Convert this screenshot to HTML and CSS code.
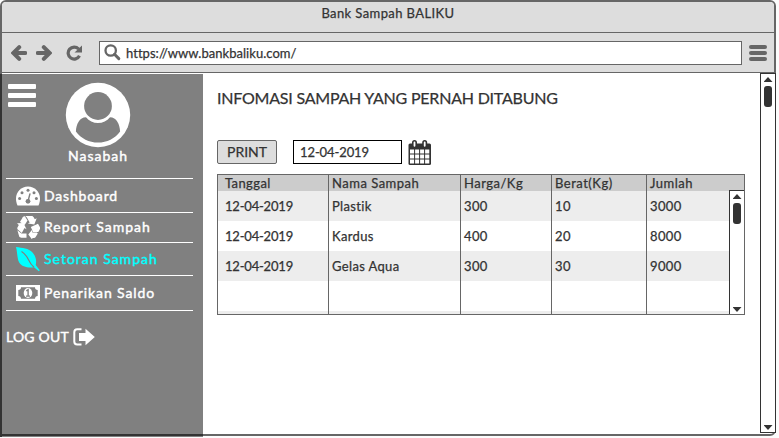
FILE: index.html
```html
<!DOCTYPE html>
<html lang="id">
<head>
<meta charset="utf-8">
<title>Bank Sampah BALIKU</title>
<link rel="stylesheet" href="styles.css">
</head>
<body>
<div class="window">
  <header class="titlebar"><span>Bank Sampah BALIKU</span></header>
  <div class="toolbar">
    <svg class="tool back" width="16" height="16" viewBox="0 0 16 16"><path d="M8.200 2.200 2.400 8l5.800 5.800M3 8h11.300" fill="none" stroke="#666" stroke-width="4" stroke-linecap="round" stroke-linejoin="miter"/></svg>
    <svg class="tool forward" width="16" height="16" viewBox="0 0 16 16"><path d="M7.800 2.200 13.600 8l-5.800 5.800M13 8H1.700" fill="none" stroke="#666" stroke-width="4" stroke-linecap="round" stroke-linejoin="miter"/></svg>
    <svg class="tool reload" width="16" height="16" viewBox="0 0 16 16"><path d="M12.600 4A6 6 0 1 0 13.500 10.800" fill="none" stroke="#666" stroke-width="3.200"/><path d="M16 .5V7.500H8.500z" fill="#666"/></svg>
    <div class="address">
      <svg width="17" height="17" viewBox="0 0 17 17"><circle cx="6.700" cy="6.500" r="5.200" fill="none" stroke="#666" stroke-width="2.300"/><path d="M10.500 10.300l4.300 4.300" stroke="#666" stroke-width="3" stroke-linecap="round"/></svg>
      <span class="url">https://www.bankbaliku.com/</span>
    </div>
    <div class="menu"><i></i><i></i><i></i></div>
  </div>
  <div class="page">
    <aside class="sidebar">
      <div class="burger"><i></i><i></i><i></i></div>
      <div class="profile">
        <svg width="66" height="66" viewBox="0 0 66 66"><circle cx="33" cy="33" r="32.200" fill="#fff"/><circle cx="33" cy="24" r="13.900" fill="#808080"/><path d="M21 35.200c-6.500 0-9.800 7-10.100 14.300C16 56.500 24 60.600 33 60.600s17-4.100 22.100-11.100C54.800 42.200 51.500 35.200 45 35.200c-3 3.500-7.200 5.800-12 5.800s-9-2.300-12-5.800z" fill="#808080"/></svg>
        <span class="name">Nasabah</span>
      </div>
      <nav>
        <a class="item dash">
          <svg width="24" height="20" viewBox="0 0 24 20"><path d="M1.500 19.500C.6 17.700 0 15 0 12.500 0 5.600 5.400.5 12 .5s12 5.100 12 12c0 2.500-.6 5.200-1.500 7z" fill="#fff"/><g fill="#808080"><circle cx="3.600" cy="12.500" r="1.500"/><circle cx="6" cy="6.700" r="1.500"/><circle cx="12" cy="4.200" r="1.500"/><circle cx="18" cy="6.700" r="1.500"/><circle cx="20.400" cy="12.500" r="1.500"/><circle cx="12" cy="15.300" r="2.400"/></g><path d="M12.200 14.500l1.700-6.500" stroke="#808080" stroke-width="1.400" stroke-linecap="round"/></svg>
          <span>Dashboard</span></a>
        <a class="item report">
          <svg width="24" height="24" viewBox="0 0 24 24" fill="#fff"><path d="M9.200 1h6.300c1 0 1.600.4 2 1.100l1.300 2.200 1.900-1.100-2.400 6.200-6.400-.9 1.800-1.100L10.700 2.300z"/><path d="M8.800 1.300 11.500 5.600 8.700 10 3.900 7 6.800 2.200C7.300 1.500 8 1.100 8.800 1.300z"/><path d="M1 8.200 7.500 8l3 6.200-2-1.100-2.700 4.900L1.700 14.600c-.5-.8-.6-1.600-.1-2.400l1.200-2.100z"/><path d="M1.400 15.300l4 3.100h5.100v4.400H5.300c-.9 0-1.700-.5-2.100-1.200z"/><path d="M22 8.700l1.800 3.400c.4.800.3 1.600-.1 2.400l-1.400 2.600-5.200-.1-2.300-4.900z"/><path d="M21.800 18.400l-2.300 3.800c-.4.500-.8.700-1.500.7h-1.700v1.800L12.300 19.600l4-5v2.800h4.600z"/></svg>
          <span>Report Sampah</span></a>
        <a class="item setoran active">
          <svg width="24" height="25" viewBox="0 0 24 25"><path d="M0 0C6.500 1 12.500 1 16.500 5.500c3.300 3.700 4.300 8 3.200 12.500l4 5.300-.8.900-4.900-4C12 21 6 20 3.200 15.500.9 11.500 1.500 5 0 0z" fill="#0ff"/><path d="M5.500 4.500c3.500 2.300 5.500 5 7 8.300 1.400 3 3 5.500 5.500 7.500" fill="none" stroke="#808080" stroke-width="1.200"/></svg>
          <span>Setoran Sampah</span></a>
        <a class="item tarik">
          <svg width="24" height="16" viewBox="0 0 24 16"><path d="M0 0h24v16H0z" fill="#fff"/><path d="M5 2.200h14c0 1.700 1 2.800 2.700 2.800v6c-1.700 0-2.700 1.100-2.700 2.800H5c0-1.700-1-2.800-2.700-2.800V5C4 5 5 3.900 5 2.200z" fill="#808080"/><ellipse cx="12" cy="8" rx="4.300" ry="5.100" fill="#fff"/><path d="M10.300 5.900l1.800-1.200v6M10 11.100h4" fill="none" stroke="#808080" stroke-width="1.400"/></svg>
          <span>Penarikan Saldo</span></a>
      </nav>
      <a class="logout"><span>LOG OUT</span>
        <svg width="22" height="18" viewBox="0 0 22 18"><path d="M8.500 1.300H4.200C2.500 1.300 1.300 2.500 1.300 4.200v9.300c0 1.700 1.200 2.900 2.900 2.900h4.300" fill="none" stroke="#fff" stroke-width="2"/><path d="M6 5h6.500V.8L21.800 9l-9.300 8.300V13H6z" fill="#fff"/></svg></a>
    </aside>
    <main>
      <h1>INFOMASI SAMPAH YANG PERNAH DITABUNG</h1>
      <div class="controls">
        <button class="print">PRINT</button>
        <div class="date">12-04-2019</div>
        <svg width="24" height="26" viewBox="0 0 24 26"><rect x=".5" y="3.500" width="22.500" height="21.500" rx="1.500" fill="#333"/><path d="M2 9.500h4.100v4H2zm5.100 0h4v4h-4zm5 0h4v4h-4zm5 0h4.200v4h-4.200zM2 14.500h4.100v4H2zm5.100 0h4v4h-4zm5 0h4v4h-4zm5 0h4.200v4h-4.200zM2 19.500h4.100v4H2zm5.100 0h4v4h-4zm5 0h4v4h-4zm5 0h4.200v4h-4.200z" fill="#fff"/><path d="M6.500 2.500v3M16.700 2.500v3" stroke="#333" stroke-width="5" stroke-linecap="round"/><path d="M6.500 2.500v3.300M16.700 2.500v3.300" stroke="#fff" stroke-width="1.800" stroke-linecap="round"/></svg>
      </div>
      <div class="grid">
        <div class="row head"><span>Tanggal</span><span>Nama Sampah</span><span>Harga/Kg</span><span>Berat(Kg)</span><span>Jumlah</span></div>
        <div class="row"><span>12-04-2019</span><span>Plastik</span><span>300</span><span>10</span><span>3000</span></div>
        <div class="row"><span>12-04-2019</span><span>Kardus</span><span>400</span><span>20</span><span>8000</span></div>
        <div class="row"><span>12-04-2019</span><span>Gelas Aqua</span><span>300</span><span>30</span><span>9000</span></div>
        <div class="row"><span></span><span></span><span></span><span></span><span></span></div>
        <div class="row last"><span></span><span></span><span></span><span></span><span></span></div>
        <div class="scroll inner"><b class="up"></b><b class="thumb"></b><b class="down"></b></div>
      </div>
    </main>
    <div class="scroll outer"><b class="up"></b><b class="thumb"></b><b class="down"></b></div>
  </div>
</div>
</body>
</html>
```
FILE: styles.css
```css
* { box-sizing: border-box; }
body {
  margin: 0;
  height: 438px;
  overflow: hidden;
  background: #fcfcfc;
  color: #333;
  font: 400 13px/16px Lato, "Liberation Sans", sans-serif;
  -webkit-text-stroke: .25px currentColor;
}
svg { display: block; flex: none; }
span { white-space: nowrap; }
.window {
  width: 776px;
  height: 436px;
  border: 2px solid #666;
  border-radius: 6px;
  background: #fff;
}
.titlebar {
  height: 31px;
  padding-top: 3px;
  border-bottom: 1px solid #666;
  border-radius: 4px 4px 0 0;
  background: #ddd;
  text-align: center;
  letter-spacing: .4px;
}
.toolbar {
  display: flex;
  align-items: center;
  height: 40px;
  padding-left: 9px;
  border-bottom: 1px solid #666;
  background: #ddd;
}
.forward { margin-left: 9px; }
.reload { margin-left: 14px; }
.address {
  display: flex;
  align-items: center;
  gap: 5px;
  width: 643px;
  height: 24px;
  margin-left: 17px;
  padding-left: 4px;
  border: 1px solid #666;
  background: #fff;
}
.url { letter-spacing: .04px; }
.menu { display: grid; gap: 2px; margin-left: 7px; }
.menu i { width: 18px; height: 4px; border-radius: 2px; background: #666; }
.page { display: flex; height: 361px; }
.sidebar {
  position: relative;
  flex: none;
  width: 203px;
  height: 363px;
  margin: 1px 0 0 -2px;
  border-left: 2px solid #333;
  background: #808080;
  color: #fff;
  font-size: 14px;
  -webkit-text-stroke: .4px currentColor;
}
.sidebar::after {
  content: "";
  position: absolute;
  left: 0;
  bottom: 1px;
  width: 201px;
  height: 2px;
  background: #333;
}
.burger { position: absolute; left: 6px; top: 10px; display: grid; gap: 4px; }
.burger i { width: 28px; height: 5px; border-radius: 1px; background: #fff; }
.profile {
  display: flex;
  flex-direction: column;
  align-items: center;
  width: 192px;
  height: 104px;
  padding-top: 8px;
}
.name { letter-spacing: 1px; }
nav { width: 187px; margin-left: 4px; border-bottom: 1px solid #fff; }
.item {
  display: flex;
  align-items: center;
  gap: 4px;
  padding-left: 10px;
  border-top: 1px solid #fff;
  letter-spacing: 1px;
}
.dash { height: 34px; letter-spacing: .8px; }
.report { height: 30px; padding-bottom: 2px; }
.setoran { height: 33px; }
.tarik { height: 35px; letter-spacing: .9px; }
.active { color: #0ff; }
.logout { display: flex; align-items: center; gap: 4px; margin: 17px 0 0 4px; padding-bottom: 1px; letter-spacing: .2px; }
main { width: 557px; padding: 15px 0 0 14px; }
h1 {
  margin: 0;
  font-size: 16px;
  line-height: 20px;
  font-weight: 400;
  letter-spacing: -.22px;
  white-space: nowrap;
}
.controls { display: flex; height: 26px; margin-top: 32px; }
.print {
  width: 60px;
  height: 24px;
  padding: 0 0 1px;
  border: 1px solid #666;
  border-radius: 2px;
  background: #ddd;
  color: #333;
  font: inherit;
  font-size: 14px;
}
.date {
  width: 109px;
  height: 24px;
  margin: 0 6px 0 16px;
  padding: 3px 6px;
  border: 1px solid #000;
  letter-spacing: -.1px;
}
.grid {
  position: relative;
  width: 528px;
  height: 141px;
  margin-top: 8px;
  border: 1px solid #666;
  overflow: hidden;
}
.row {
  display: grid;
  grid-template-columns: 111px 132px 91px 95px 97px;
  height: 30px;
  line-height: 30px;
  letter-spacing: .35px;
}
.row span { padding-left: 3px; border-right: 1px solid #666; }
.row span:first-child { padding-left: 7px; letter-spacing: -.2px; }
.row span:last-child { border-right: 0; }
.row:nth-child(even) { background: #ededed; }
.head { height: 16px; line-height: 17px; background: #ccc; letter-spacing: .5px; }
.head span:first-child { letter-spacing: .4px; }
.last { height: 3px; }
.scroll {
  display: flex;
  flex-direction: column;
  align-items: center;
  width: 16px;
  border: 1px solid #333;
  background: #fff;
}
.inner { position: absolute; right: -1px; top: 15px; height: 125px; }
.outer { flex: none; height: 360px; margin-right: -2px; }
.up, .down { width: 9px; height: 5px; background: #333; }
.up { margin-top: 3px; clip-path: polygon(50% 0, 100% 100%, 0 100%); }
.down { margin: auto 0 2px; clip-path: polygon(0 0, 100% 0, 50% 100%); }
.thumb { width: 8px; height: 21px; margin-top: 4px; border-radius: 3px; background: #333; }
```
